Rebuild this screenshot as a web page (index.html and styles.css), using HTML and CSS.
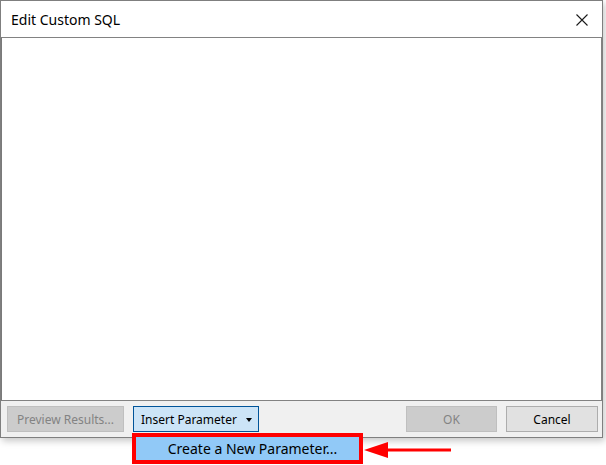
FILE: index.html
```html
<!DOCTYPE html>
<html>
<head>
<meta charset="utf-8">
<link rel="stylesheet" href="styles.css">
</head>
<body>
<div class="window">
  <div class="titlebar">
    <span class="title">Edit Custom SQL</span>
    <svg class="close" width="12" height="12" viewBox="0 0 12 12"><path d="M0.5 0.5 L11.5 11.5 M11.5 0.5 L0.5 11.5" stroke="#1a1a1a" stroke-width="1.1" fill="none"/></svg>
  </div>
  <div class="editor"></div>
  <div class="footer">
    <button class="btn disabled preview">Preview Results...</button>
    <button class="btn focused insert">Insert Parameter <span class="caret"></span></button>
    <span class="spacer"></span>
    <button class="btn disabled ok">OK</button>
    <button class="btn cancel">Cancel</button>
  </div>
</div>
<div class="menu"><div class="menu-item">Create a New Parameter...</div></div>
<svg class="arrow" width="92" height="20" viewBox="0 0 92 20"><polygon points="0,9 24,1 24,17" fill="#ff0000"/><rect x="22" y="7.5" width="65" height="3" fill="#ff0000"/></svg>
</body>
</html>
```
FILE: styles.css
```css
html, body {
  margin: 0;
  padding: 0;
  background: #ffffff;
}
body {
  width: 606px;
  height: 465px;
  overflow: hidden;
  position: relative;
  font-family: "Noto Sans", "Open Sans", sans-serif;
}
.window {
  width: 601px;
  border: 1px solid #7f7f7f;
  background: #ffffff;
  box-shadow: 2px 3px 7px rgba(0, 0, 0, 0.22);
  display: flex;
  flex-direction: column;
}
.titlebar {
  height: 36px;
  display: flex;
  align-items: center;
  justify-content: space-between;
  padding: 0 14px 0 10px;
}
.title {
  font-size: 14px;
  color: #000000;
  padding-top: 1px;
}
.close {
  display: block;
  margin-top: 1px;
}
.editor {
  height: 362px;
  border: 1px solid #828282;
  border-left-color: #7a7a7a;
  background: #ffffff;
}
.footer {
  height: 36px;
  background: #f0f0f0;
  display: flex;
  align-items: flex-start;
  padding: 5px 4px 0 6px;
  box-sizing: border-box;
}
.btn {
  height: 26px;
  box-sizing: border-box;
  font-family: "Noto Sans", "Open Sans", sans-serif;
  font-size: 12px;
  padding: 0;
  margin: 0;
  display: flex;
  align-items: center;
  justify-content: center;
  border: 1px solid #adadad;
  background: #e1e1e1;
  color: #000000;
}
.disabled {
  background: #cccccc;
  border-color: #bfbfbf;
  color: #838383;
}
.focused {
  background: #cce4f7;
  border-color: #005499;
}
.preview { width: 117px; }
.insert { width: 126px; margin-left: 9px; justify-content: flex-start; padding-left: 7px; }
.caret {
  width: 0;
  height: 0;
  border-left: 3px solid transparent;
  border-right: 3px solid transparent;
  border-top: 4px solid #000000;
  margin-left: 9px;
  margin-top: 1px;
}
.spacer { flex: 1; }
.ok { width: 91px; }
.cancel { width: 92px; margin-left: 9px; }
.menu {
  position: absolute;
  left: 132px;
  top: 433px;
  width: 231px;
  height: 31px;
  box-sizing: border-box;
  border: 4px solid #ff0000;
  background: #91c9f7;
}
.menu-item {
  height: 100%;
  display: flex;
  align-items: center;
  justify-content: center;
  font-size: 14px;
  color: #000000;
  padding-left: 10px;
  box-sizing: border-box;
}
.arrow {
  position: absolute;
  left: 364px;
  top: 441px;
}
```
